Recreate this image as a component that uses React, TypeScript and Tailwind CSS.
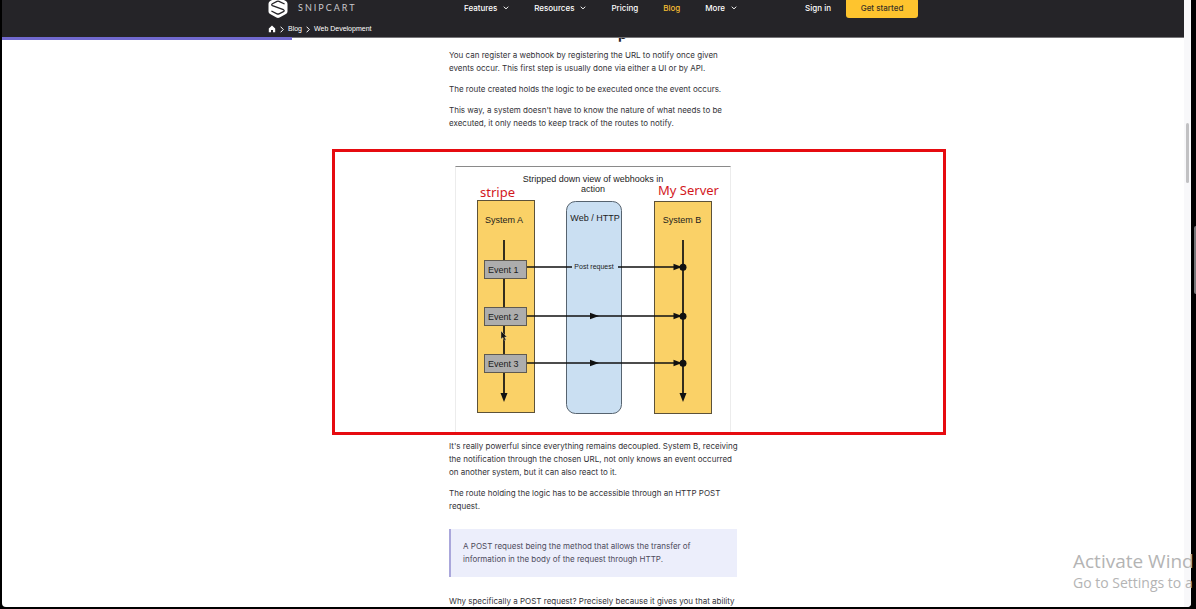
import React from "react";

const navItems = [
  { label: "Features", menu: true },
  { label: "Resources", menu: true },
  { label: "Pricing" },
  { label: "Blog", active: true },
  { label: "More", menu: true },
];

function ChevronDown() {
  return (
    <svg viewBox="0 0 6 4" className="h-1 w-1.5" fill="none" stroke="currentColor" strokeWidth="1" aria-hidden="true">
      <path d="M0.8 0.7 3 2.9 5.2 0.7" />
    </svg>
  );
}

function ChevronRight() {
  return (
    <svg viewBox="0 0 4 7" className="h-[7px] w-1" fill="none" stroke="currentColor" strokeWidth="1" aria-hidden="true">
      <path d="M0.6 0.7 3.3 3.5 0.6 6.3" />
    </svg>
  );
}

function Header() {
  return (
    <header className="relative h-[38px] shrink-0 overflow-hidden border-b border-[#777679] bg-[#252428] text-white">
      <div className="mx-auto -mt-[2px] max-w-[650px]">
        <div className="flex h-5 items-center">
          <a href="#home" className="flex items-center gap-2.5">
            <svg viewBox="0 0 20 22" className="h-[22px] w-5" aria-hidden="true">
              <path
                d="M8.4 0.6Q10-0.3 11.6 0.6L17.9 4.1Q19.5 5 19.5 6.8V14.4Q19.5 16.2 17.9 17.1L11.6 20.6Q10 21.5 8.4 20.6L2.1 17.1Q0.5 16.2 0.5 14.4V6.8Q0.5 5 2.1 4.1Z"
                fill="#fff"
              />
              <path
                d="M16.6 7 11 4.4Q10 4 9 4.4L4.4 6.7Q3 7.6 4.4 8.6L15.4 12.7Q17 13.7 15.4 14.7L11 16.8Q10 17.2 9 16.8L3.4 14"
                fill="none"
                stroke="#252428"
                strokeWidth="1.3"
              />
            </svg>
            <span className="font-['Lato',sans-serif] text-[9px] leading-3 tracking-[2px] text-[#c9c9cc]">SNIPCART</span>
          </a>
          <nav className="ml-auto flex items-center gap-[25px] font-medium">
            {navItems.map((item) => (
              <a
                key={item.label}
                href={"#" + item.label.toLowerCase()}
                className={item.active ? "text-[#f5bd32]" : "flex items-center gap-1.5"}
              >
                {item.label}
                {item.menu && <ChevronDown />}
              </a>
            ))}
          </nav>
          <a href="#signin" className="ml-[68px] font-medium">Sign in</a>
          <button type="button" className="ml-[15px] h-5 w-[72px] rounded-[3px] bg-[#fec42e] font-medium text-[#3a3326]">
            Get started
          </button>
        </div>
        <nav aria-label="Breadcrumb" className="mt-[5px] flex items-center gap-1 font-['Liberation_Sans',sans-serif] text-[7px] leading-3">
          <a href="#home" aria-label="Home">
            <svg viewBox="0 0 8 8" className="size-2" fill="#fff" aria-hidden="true">
              <path d="M4 0.6 7.2 3.4V7.2H5V5H3V7.2H0.8V3.4Z" />
            </svg>
          </a>
          <ChevronRight />
          <a href="#blog">Blog</a>
          <ChevronRight />
          <a href="#web">Web Development</a>
        </nav>
      </div>
    </header>
  );
}

const rows = [
  { y: 101, label: "Event 1", boxY: 94 },
  { y: 150, label: "Event 2", boxY: 141 },
  { y: 197, label: "Event 3", boxY: 188 },
];

function Diagram() {
  return (
    <svg
      viewBox="0 0 275 266"
      className="h-[266px] w-[275px] font-['Liberation_Sans',sans-serif]"
      role="img"
      aria-label="Stripped down view of webhooks in action"
    >
      <g stroke="#5c5239" strokeWidth="1">
        <rect x="21.5" y="34.5" width="57" height="212" fill="#fad167" />
        <rect x="198.5" y="35.5" width="57" height="212" fill="#fad167" />
        <rect x="110.5" y="35.5" width="55" height="212" rx="9" fill="#cadff2" stroke="#56636f" />
      </g>
      <g stroke="#111" strokeWidth="1.7">
        <path d="M48 74V230M227 74V230" />
        {rows.map((r) => (
          <path key={r.y} d={r.boxY === 94 ? "M70 101H116M162 101H226" : "M70 " + r.y + "H226"} />
        ))}
      </g>
      <g fill="#111">
        <path d="M44.5 227H51.5L48 236ZM223.5 227H230.5L227 236Z" />
        {rows.map((r) => (
          <g key={r.y} transform={"translate(0 " + r.y + ")"}>
            <path d="M217.5-3.3V3.3L226 0Z" />
            <circle cx="227" cy="0.3" r="3.5" />
            {r.boxY !== 94 && <path d="M134-3.3V3.3L143 0Z" />}
          </g>
        ))}
      </g>
      {rows.map((r) => (
        <g key={r.label}>
          <rect x="28.5" y={r.boxY + 0.5} width="42" height="18" fill="#adadad" stroke="#5f5a50" />
          <text x="32" y={r.boxY + 13} fontSize="9" fill="#1c1c1c">{r.label}</text>
        </g>
      ))}
      <g fill="#1c1c1c" fontSize="9" textAnchor="middle">
        <text x="137" y="16">Stripped down view of webhooks in</text>
        <text x="137" y="26">action</text>
        <text x="48" y="57">System A</text>
        <text x="139" y="55">Web / HTTP</text>
        <text x="226" y="57">System B</text>
        <text x="138" y="103" fontSize="7">Post request</text>
      </g>
      <g fill="#d3181d" fontSize="13" className="font-['Noto_Sans',sans-serif]">
        <text x="24" y="31">stripe</text>
        <text x="202" y="29">My Server</text>
      </g>
      <path d="M45 165V173L47 171.5 48.5 174.5 50 174 48.5 171H51Z" fill="#111" stroke="#e8d9ae" strokeWidth="0.4" />
    </svg>
  );
}

export default function App() {
  return (
    <div className="relative flex h-screen overflow-hidden bg-black pr-[5px] pb-[2px] pl-[2px] font-['Inter',sans-serif] text-[8px] leading-[13px] text-[#333237]">
      <div className="flex min-w-0 flex-1 overflow-hidden rounded-b-[4px] bg-white">
        <div className="relative flex min-w-0 flex-1 flex-col overflow-hidden">
          <h2 className="absolute top-[25px] left-[616px] text-[14px] leading-[18px] font-bold text-[#252428]">p</h2>
          <Header />
          <div className="absolute top-[37px] left-0 h-[3px] w-[290px] bg-[#7169cf]" />
          <main className="flex flex-col items-center pt-[11px]">
            <div className="flex w-[288px] flex-col gap-2 whitespace-nowrap">
              <p>
                You can register a webhook by registering the URL to notify once given
                <br />
                events occur. This first step is usually done via either a UI or by API.
              </p>
              <p>The route created holds the logic to be executed once the event occurs.</p>
              <p>
                This way, a system doesn't have to know the nature of what needs to be
                <br />
                executed, it only needs to keep track of the routes to notify.
              </p>
            </div>
            <figure className="mt-[19px] ml-[92px] h-[286px] w-[614px] shrink-0 border-[3px] border-[#e60b10] pt-[14px] pl-[120px]">
              <div className="w-[276px] border-x border-t border-x-[#ececec] border-t-[#8a8a8a]">
                <div className="-mt-px h-[266px]">
                  <Diagram />
                </div>
              </div>
            </figure>
            <div className="mt-[5px] flex w-[288px] flex-col gap-2 whitespace-nowrap">
              <p>
                It's really powerful since everything remains decoupled. System B, receiving
                <br />
                the notification through the chosen URL, not only knows an event occurred
                <br />
                on another system, but it can also react to it.
              </p>
              <p>
                The route holding the logic has to be accessible through an HTTP POST
                <br />
                request.
              </p>
              <blockquote className="mt-2 border-l-2 border-[#aaa7db] bg-[#eceefb] py-[11px] pl-3 text-[#4c4b5b]">
                A POST request being the method that allows the transfer of
                <br />
                information in the body of the request through HTTP.
              </blockquote>
              <p className="mt-2.5">Why specifically a POST request? Precisely because it gives you that ability</p>
            </div>
          </main>
        </div>
        <div className="w-[7px] shrink-0 bg-[#f8f8fa] px-[2px] pt-[123px]">
          <div className="h-[60px] rounded-full bg-[#c1c1c3]" />
        </div>
      </div>
      <div className="absolute top-[226px] right-0 h-[68px] w-[2px] rounded-l bg-[#77777a]" />
      <aside className="absolute top-[549px] left-[1073px] font-['Open_Sans',sans-serif] whitespace-nowrap text-[#b4b4b4]">
        <p className="text-[19px] leading-6">Activate Wind</p>
        <p className="text-[14px] leading-5">Go to Settings to a</p>
      </aside>
    </div>
  );
}
